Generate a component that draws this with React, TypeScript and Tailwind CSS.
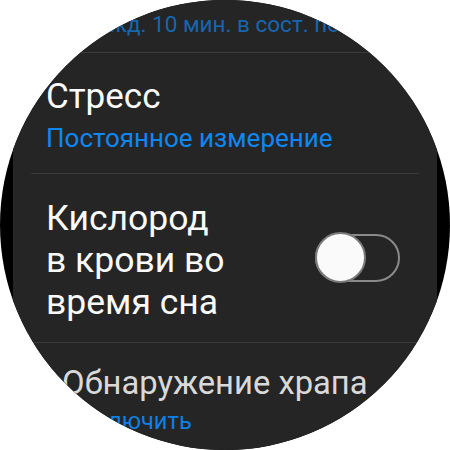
import React from "react";

function Toggle() {
  return (
    <div className="relative w-[85px] h-[51px] shrink-0 flex items-center">
      <div className="w-[85px] h-[48px] rounded-full border-2 border-[#8a8a8a]" />
      <div className="absolute left-0 top-0 w-[51px] h-[51px] rounded-full bg-[#fafafa] border-2 border-[#7a7a7a]" />
    </div>
  );
}

function Sep() {
  return <div className="h-px mx-[18px] bg-[#3a3a3a] shrink-0" />;
}

export default function App() {
  return (
    <div
      className="w-[450px] h-[450px] bg-white"
      style={{ fontFamily: "Roboto, 'Noto Sans', sans-serif" }}
    >
      <div className="w-[450px] h-[450px] rounded-full bg-black overflow-hidden flex justify-center">
        <div className="w-[424px] h-full bg-[#252525] flex flex-col">
          <div className="h-[52px] shrink-0 pt-[13px] pl-[70px] whitespace-nowrap overflow-hidden">
            <div className="text-[22.5px] leading-none text-[#1766ae]">Кажд. 10 мин. в сост. покоя</div>
          </div>
          <Sep />
          <div className="h-[120px] shrink-0 pt-[26px] pl-[33px]">
            <div className="text-[35px] leading-none text-[#fafafa]">Стресс</div>
            <div className="mt-[11px] text-[26px] leading-none text-[#0d88f2]">Постоянное измерение</div>
          </div>
          <Sep />
          <div className="h-[168px] shrink-0 pt-[23px] pl-[33px] pr-[37px] flex items-start justify-between">
            <div className="text-[35.5px] leading-[42px] text-[#fafafa]">
              Кислород
              <br />
              в крови во
              <br />
              время сна
            </div>
            <div className="mt-[35px]">
              <Toggle />
            </div>
          </div>
          <Sep />
          <div className="h-[120px] shrink-0 pt-[26px] pl-[33px] scale-[0.91] origin-top whitespace-nowrap">
            <div className="text-[36px] leading-none text-[#d9d9d9]">Обнаружение храпа</div>
            <div className="mt-[11px] text-[26px] leading-none text-[#0f80e6]">Выключить</div>
          </div>
        </div>
      </div>
    </div>
  );
}
